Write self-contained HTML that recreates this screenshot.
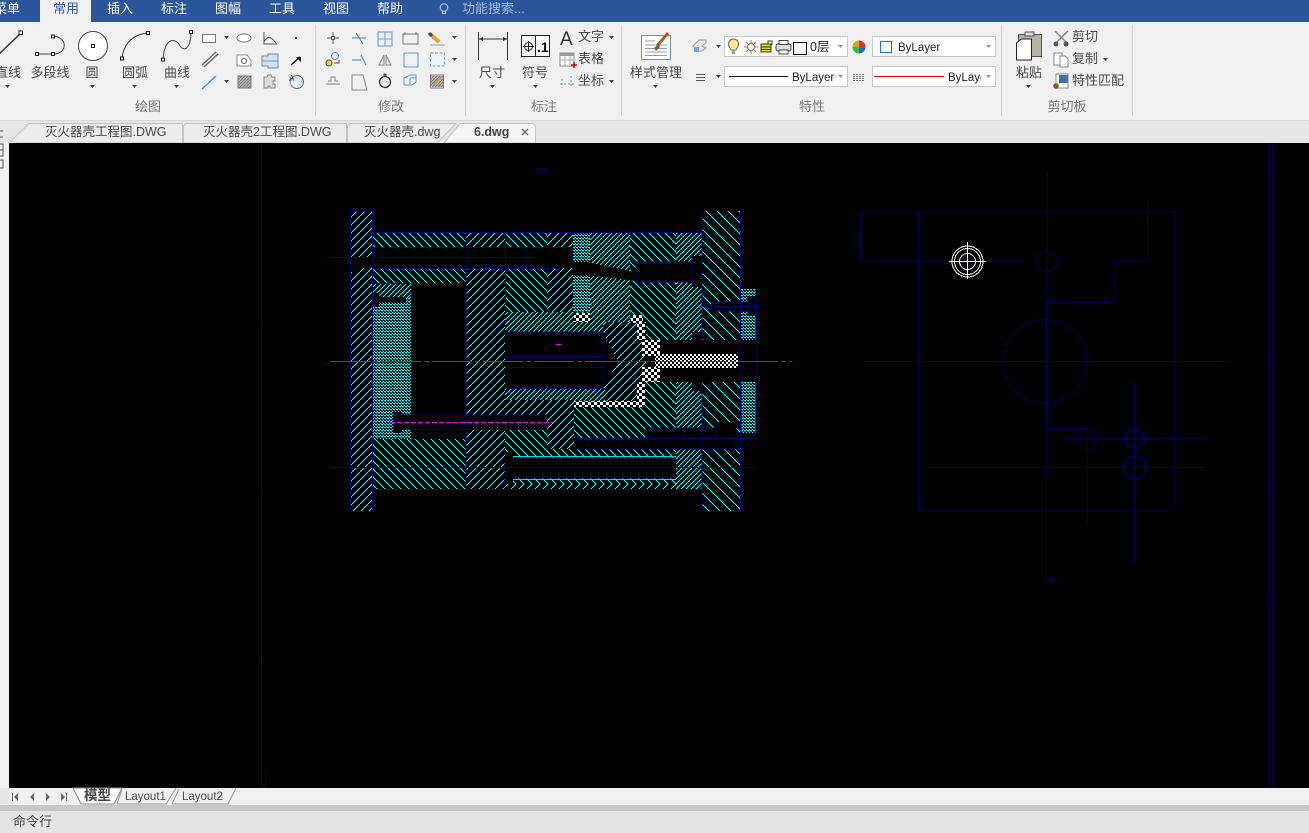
<!DOCTYPE html>
<html><head><meta charset="utf-8"><title>CAD</title>
<style>
html,body{margin:0;padding:0;width:1309px;height:833px;overflow:hidden;background:#f0f0f0}
svg{display:block}
text{font-family:"Liberation Sans","Noto Sans CJK SC",sans-serif;font-size:12px;fill:#444}
.m{fill:#fff;font-size:13px}
.l{text-anchor:middle;font-size:13px;fill:#4a4a4a}
.g{text-anchor:middle;font-size:13px;fill:#777}
.t{font-size:13px;fill:#4a4a4a}
.tb{font-size:12.5px;fill:#4a4a4a}
.by{font-size:11.5px;fill:#222}
.a{fill:#444}
.i{fill:none;stroke:#555;stroke-width:1}
.n{fill:none;stroke:#000070;stroke-width:1;shape-rendering:crispEdges}
.d{fill:none;stroke:#00004c;stroke-width:1;shape-rendering:crispEdges}
.c{fill:none;stroke:#000058;stroke-width:1}
</style></head><body>
<svg width="1309" height="833" viewBox="0 0 1309 833" xmlns="http://www.w3.org/2000/svg">
<defs>
<pattern id="f" width="8" height="8" patternUnits="userSpaceOnUse"><rect width="8" height="8" fill="#000"/><path d="M0 8L8 0" stroke="#00ffff" stroke-width="1.1" shape-rendering="crispEdges"/></pattern>
<pattern id="b" width="8" height="8" patternUnits="userSpaceOnUse"><rect width="8" height="8" fill="#000"/><path d="M0 0L8 8" stroke="#00ffff" stroke-width="1.1" shape-rendering="crispEdges"/></pattern>
<pattern id="F" width="5" height="5" patternUnits="userSpaceOnUse"><rect width="5" height="5" fill="#000"/><path d="M0 5L5 0" stroke="#00ffff" stroke-width="1.1" shape-rendering="crispEdges"/></pattern>
<pattern id="B" width="11" height="11" patternUnits="userSpaceOnUse"><rect width="11" height="11" fill="#000"/><path d="M0 0L11 11" stroke="#00ffff" stroke-width="1.1" shape-rendering="crispEdges"/></pattern>
<pattern id="D" width="3" height="3" patternUnits="userSpaceOnUse"><rect width="3" height="3" fill="#000"/><rect x="0" y="1" width="2" height="1" fill="#00ffff"/><rect x="2" y="0" width="1" height="1" fill="#00ffff"/><rect x="1" y="2" width="1" height="1" fill="#008c8c"/></pattern>
<pattern id="W" width="6" height="6" patternUnits="userSpaceOnUse"><rect width="6" height="6" fill="#000"/><rect width="3" height="3" fill="#fff"/><rect x="3" y="3" width="3" height="3" fill="#fff"/></pattern>
<pattern id="W2" width="4" height="4" patternUnits="userSpaceOnUse"><rect width="4" height="4" fill="#000"/><rect width="2" height="2" fill="#fff"/><rect x="2" y="2" width="2" height="2" fill="#fff"/></pattern>
<pattern id="H" width="3" height="3" patternUnits="userSpaceOnUse"><rect width="3" height="3" fill="#bbb"/><path d="M0 3L3 0" stroke="#777"/></pattern>
</defs>

<!-- chrome -->
<rect width="1309" height="833" fill="#f0f0f0"/>
<rect width="1309" height="22" fill="#2b579a"/>
<rect x="40" y="0" width="51" height="23" fill="#f0f0f0"/>
<text class="m" x="-6" y="13">菜单</text>
<text x="53" y="13" style="font-size:13px;fill:#2b579a">常用</text>
<text class="m" x="107" y="13">插入</text>
<text class="m" x="161" y="13">标注</text>
<text class="m" x="215" y="13">图幅</text>
<text class="m" x="269" y="13">工具</text>
<text class="m" x="323" y="13">视图</text>
<text class="m" x="377" y="13">帮助</text>
<g fill="none" stroke="#c4d2e8"><circle cx="444" cy="7.500" r="3.800"/><path d="M442.500 11v2.500h3V11"/></g>
<text x="462" y="13" style="font-size:13px;fill:#a8bcdb">功能搜索...</text>

<rect y="121" width="1309" height="22" fill="#e6e6e6"/>
<rect y="120" width="1309" height="1" fill="#d8d8d8"/>
<g stroke="#d4d4d4"><path d="M315.500 25V116M465.500 25V116M621.500 25V116M1001.500 25V116M1132.500 25V116" fill="none"/></g>

<!-- draw group -->
<path d="M-2 55L20 34" stroke="#444" stroke-width="1.600"/>
<rect x="19" y="31" width="3.500" height="3.500" fill="#fff" stroke="#222"/>
<path d="M37 54H53M53 36C68 37 68 54 53 54" fill="none" stroke="#444"/>
<g fill="#fff" stroke="#222"><rect x="35.500" y="52.500" width="3" height="3"/><rect x="51.500" y="52.500" width="3" height="3"/><rect x="51.500" y="35" width="3" height="3"/></g>
<circle cx="93" cy="46" r="14.500" fill="#fff" stroke="#444"/><rect x="91.500" y="44.500" width="3" height="3" fill="#fff" stroke="#222"/>
<path d="M122 58Q125 36 147 33" fill="none" stroke="#333"/><g fill="#fff" stroke="#111"><rect x="120.500" y="57" width="3" height="3"/><rect x="146.500" y="31.500" width="3" height="3"/></g>
<path d="M163 59C165 36 176 38 180 46C186 54 191 44 191 33" fill="none" stroke="#444"/><g fill="#fff" stroke="#222"><rect x="161.500" y="58" width="3" height="3"/><rect x="189.500" y="30.500" width="3" height="3"/></g>
<text class="l" x="8" y="77">直线</text><text class="l" x="50" y="77">多段线</text><text class="l" x="92" y="77">圆</text><text class="l" x="135" y="77">圆弧</text><text class="l" x="177" y="77">曲线</text>
<g class="a"><path d="M5 85h5l-2.500 3zM90 85h5l-2.500 3zM132 85h5l-2.500 3zM174 85h5l-2.500 3zM224 36h5l-2.500 3zM224 80h5l-2.500 3z"/></g>
<rect x="202.500" y="34.500" width="13" height="8" fill="#fff" stroke="#777"/>
<ellipse cx="244" cy="38" rx="7" ry="4" fill="#fff" stroke="#777"/>
<path d="M264 32V44H277M264 42C268 34 272 38 276 43" class="i"/><rect x="295" y="37" width="2" height="2" fill="#555"/>
<path d="M202 65L216 52M204 67L218 54" stroke="#666" stroke-width="1.400"/>
<path d="M237 55H247L251 60V66H237Z" fill="#fff" stroke="#888"/><circle cx="244" cy="61" r="2.500" class="i"/>
<path d="M262 56h6v-2h10v14h-10v-2h-6z" fill="#cfe0ee" stroke="#888"/><path d="M262 61h16" stroke="#5b9bd5"/>
<path d="M291 65L300 57" stroke="#111" stroke-width="1.400"/><path d="M296 57h5v5z" fill="#111"/>
<path d="M202 89L216 76" stroke="#2e9ae0" stroke-width="1.400"/>
<rect x="238" y="76" width="13" height="12" fill="url(#H)" stroke="#777"/>
<path d="M264 77h3l1-2h3l1 2h3v4h-2v3h2v4h-5v-2h-2v2h-4z" fill="#ddd" stroke="#888"/>
<circle cx="297" cy="82" r="6.500" fill="#cde6f7" stroke="#666"/><path d="M290.500 81h6.500v7a7 7 0 0 1-6.500-7z" fill="#fff"/><text x="289" y="81" style="font-size:8px;fill:#333">A</text>
<text class="g" x="148" y="111">绘图</text>

<!-- modify -->
<g class="i">
<path d="M333 32v4M333 40v4M327 38h4M335 38h4"/><rect x="331.500" y="36.500" width="3" height="3"/>
<path d="M352 38h14M356 33l7 11" stroke="#4a84b8"/>
<path d="M378 32h14v14h-14zM385 32v14M378 39h14" stroke="#5b9bd5"/>
<rect x="403" y="34" width="15" height="10" stroke="#777"/><path d="M405 32v3M416 32v3" stroke="#4a84b8"/>
<circle cx="335" cy="56" r="3.500" stroke="#4a90d0"/><path d="M334 63h5v-3" stroke="#a33"/>
<path d="M352 60h6M358 60h3M361 55l5 10" stroke="#4a84b8"/>
<path d="M384 55v10h-5zM386 55v10h5z" stroke="#888"/>
<rect x="404" y="53" width="14" height="14" stroke="#5b9bd5"/>
<rect x="430.500" y="53" width="14" height="13" stroke="#6aa9dc" stroke-dasharray="3 1.500"/>
<path d="M326 84h14M328 81h3v-4h4v4h3" stroke="#6a8aa5"/>
<path d="M352 75h11l4 15h-15z" stroke="#888"/>
<circle cx="385" cy="82" r="5.500" stroke="#333" stroke-width="1.300"/><rect x="384" y="74" width="2" height="2" fill="#333"/>
<path d="M404 78l6-3h6v7l-4 3h-8zM410 78h6M410 78v7" stroke="#5b9bd5"/>
<rect x="430.500" y="75" width="13" height="13" stroke="#777"/>
</g>
<circle cx="329" cy="63" r="3" fill="#f4d800" stroke="#555"/>
<rect x="431" y="76" width="12" height="11" fill="url(#H)"/>
<path d="M434 84l8-7" stroke="#e09020" stroke-width="1.500"/>
<path d="M430 34l9 8" stroke="#e8a030" stroke-width="4"/><path d="M429 33l3 3" stroke="#444" stroke-width="3"/><path d="M430 45h15" stroke="#999"/>
<g class="a"><path d="M452 36h5l-2.500 3zM452 58h5l-2.500 3zM452 80h5l-2.500 3z"/></g>
<text class="g" x="391" y="111">修改</text>

<!-- dim -->
<path d="M478.500 32V60M507.500 32V60M479 39H507" fill="none" stroke="#333"/>
<path d="M479 39l4-2v4zM507 39l-4-2v4z" fill="#333"/>
<text class="l" x="492" y="77">尺寸</text>
<path d="M490 85h5l-2.500 3zM533 85h5l-2.500 3z" class="a"/>
<rect x="521.500" y="35.500" width="28" height="21" fill="#fff" stroke="#222"/><path d="M535.500 35.500v21" stroke="#222"/>
<circle cx="528.500" cy="46.500" r="4" fill="none" stroke="#222"/><path d="M528.500 41v11M523 46.500h11" stroke="#222"/>
<text x="537" y="52" style="font-size:14px;font-weight:bold;fill:#000">.1</text>
<text class="l" x="535" y="77">符号</text>
<text x="560" y="45" style="font-size:19px;fill:#333">A</text>
<text class="t" x="578" y="41">文字</text><text class="t" x="578" y="63">表格</text><text class="t" x="578" y="85">坐标</text>
<rect x="560" y="53" width="14" height="13" fill="#fff" stroke="#888"/><rect x="560" y="53" width="14" height="3" fill="#999"/><path d="M560 60h14M565 56v10M570 56v10" stroke="#aaa"/>
<path d="M571 65h6M574 62v6" stroke="#c00" stroke-width="1.500"/>
<g stroke="#5b8fb8" stroke-dasharray="2 2" fill="none"><path d="M562 79v9M571 76v12M560 84h14"/></g>
<path d="M609 36h5l-2.500 3zM609 80h5l-2.500 3z" class="a"/>
<text class="g" x="544" y="111">标注</text>

<!-- style -->
<rect x="641.500" y="35.500" width="29" height="24" fill="#fff" stroke="#7f8f9f"/>
<path d="M645 41h10M645 45h22M645 48.500h22M645 52h22M645 55.500h22" stroke="#8aa0b5"/>
<path d="M657 46l11-13" stroke="#a4622a" stroke-width="3"/><path d="M654 48l5-4 1 3-4 4z" fill="#8b5a2b"/>
<text class="l" x="656" y="77">样式管理</text>
<path d="M653 85h5l-2.500 3z" class="a"/>

<!-- properties -->
<path d="M693 46l6-6h7v3l-4 3 4 2-4 3h-6v-2z" fill="#e8e8e8" stroke="#999"/><rect x="694" y="47" width="5" height="5" fill="#7ba7d0"/>
<path d="M696 74.500h9M696 77.500h9M696 80.500h9" stroke="#555"/>
<path d="M716 45h5l-2.500 3zM716 75h5l-2.500 3z" class="a"/>
<g fill="#fff" stroke="#c8c8c8"><rect x="724.500" y="36.500" width="123" height="20"/><rect x="872.500" y="36.500" width="123" height="20"/><rect x="724.500" y="66.500" width="123" height="20"/><rect x="872.500" y="66.500" width="123" height="20"/></g>
<path d="M731 50c-2-3-2.500-4-2.500-6a5 5 0 0 1 10 0c0 2-.5 3-2.500 6z" fill="#ffe98a" stroke="#666"/><rect x="732" y="50" width="3" height="4" fill="#999"/>
<circle cx="751" cy="47" r="3.500" fill="#fff6c8" stroke="#777"/><path d="M751 40v3M751 51v3M744 47h3M755 47h3M746 42l2 2M754 50l2 2M746 52l2-2M754 44l2-2" stroke="#777"/>
<rect x="761" y="44" width="10" height="8" fill="#e8d800" stroke="#333"/><path d="M768 44v-3h4v4" fill="none" stroke="#333"/><path d="M761 47h10M761 49.500h10" stroke="#333"/>
<rect x="776" y="44" width="15" height="7" rx="2" fill="#ddd" stroke="#444"/><rect x="779" y="40.500" width="9" height="4" fill="#fff" stroke="#444"/><rect x="779" y="50" width="9" height="4" fill="#fff" stroke="#444"/>
<rect x="793.500" y="42.500" width="13" height="12" fill="#fff" stroke="#111"/>
<text x="810" y="51" style="fill:#222;font-size:12.500px">0层</text>
<g fill="#999"><path d="M838 45h5l-2.500 3zM986 45h5l-2.500 3zM838 75h5l-2.500 3zM986 75h5l-2.500 3z"/></g>
<circle cx="859" cy="47" r="6.500" fill="#e8d020"/><path d="M859 47V40.500A6.500 6.500 0 0 1 865.500 47z" fill="#e03030"/><path d="M859 47H865.500A6.500 6.500 0 0 1 859 53.500z" fill="#3060e0"/><path d="M859 47V53.500A6.500 6.500 0 0 1 852.500 47z" fill="#30c040"/><path d="M859 47L852.500 47A6.500 6.500 0 0 1 859 40.500z" fill="#e0a020"/>
<rect x="880.500" y="41.500" width="11" height="11" fill="#fff" stroke="#1a78c8"/>
<text class="by" x="898" y="51">ByLayer</text>
<path d="M729 76.500h59" stroke="#111"/>
<text class="by" x="792" y="81">ByLayer</text>
<path d="M874 76.500h70" stroke="#d00"/>
<svg x="948" y="66" width="33" height="20" viewBox="0 0 33 20"><text class="by" x="0" y="15">ByLayer</text></svg>
<path d="M853 74.500h11M853 76.500h11M853 78.500h11M853 80.500h11" stroke="#777" stroke-dasharray="2 1"/>
<text class="g" x="812" y="111">特性</text>

<!-- clipboard -->
<rect x="1018.500" y="34.500" width="23" height="22" fill="#b8b1a4" stroke="#555"/><rect x="1025" y="32" width="9" height="4" fill="#ddd" stroke="#555"/>
<path d="M1016.500 43l5-4h10v21h-15z" fill="#fff" stroke="#222"/>
<text class="l" x="1029" y="77">粘贴</text><path d="M1026 85h5l-2.500 3z" class="a"/>
<path d="M1055 31l13 13M1068 31l-13 13" stroke="#888" stroke-width="1.500"/><circle cx="1056" cy="44" r="2.500" fill="#555"/><circle cx="1066" cy="44" r="2.500" fill="#555"/>
<text class="t" x="1072" y="41">剪切</text>
<path d="M1054 53h8v3h-2v9h-6z" fill="#fff" stroke="#888"/><path d="M1060 56h5l3 3v8h-8z" fill="#fff" stroke="#888"/>
<text class="t" x="1072" y="63">复制</text><path d="M1103 58h5l-2.500 3z" class="a"/>
<rect x="1056" y="74" width="12" height="14" fill="#fff" stroke="#888"/><rect x="1059" y="75" width="9" height="8" fill="#3f72a8"/><circle cx="1056" cy="86" r="2.800" fill="#8b5a2b"/>
<text class="t" x="1072" y="85">特性匹配</text>
<text class="g" x="1067" y="111">剪切板</text>

<!-- doc tabs -->
<path d="M9 143L29 123.500H182.500V143Z" fill="#ececec" stroke="#c4c4c4"/>
<path d="M183.500 143V126L186 123.500H346.500V143Z" fill="#ececec" stroke="#c4c4c4"/>
<path d="M347.500 143V126L350 123.500H456L437 143Z" fill="#ececec" stroke="#c4c4c4"/>
<path d="M444 143L460 123.500H533L535.500 126V143Z" fill="#f4f4f4" stroke="#c4c4c4"/>
<text class="tb" x="45" y="136">灭火器壳工程图.DWG</text>
<text class="tb" x="203" y="136">灭火器壳2工程图.DWG</text>
<text class="tb" x="364" y="136">灭火器壳.dwg</text>
<text x="474" y="136" style="font-weight:bold;fill:#444;font-size:12.500px">6.dwg</text>
<path d="M522 129l6 6M528 129l-6 6" stroke="#666" stroke-width="1.300"/>
<path d="M0 131h3M0 137h3M0 144h3v12H0M0 150h3M0 160h3v8H0" fill="none" stroke="#555"/>

<!-- canvas -->
<rect x="9" y="143" width="1300" height="645" fill="#000"/>
<path d="M261.500 143V788" stroke="#000088" fill="none" shape-rendering="crispEdges"/>
<g class="d">
<path d="M265.500 770V788"/>
<path d="M1268.500 143V788M1272.500 143V788"/>
<rect x="537.500" y="168.500" width="9" height="4"/>
<path d="M1267 169h6M1267 255h6M1267 362h6M1267 490h6M1267 600h6M258 320h6M258 490h6M258 660h6"/>
</g>

<!-- hatching -->
<rect x="350" y="211" width="23" height="301" fill="url(#f)"/>
<rect x="373" y="232" width="93" height="51" fill="url(#b)"/>
<rect x="466" y="232" width="39" height="258" fill="url(#f)"/>
<rect x="505" y="232" width="42" height="80" fill="url(#b)"/>
<rect x="547" y="232" width="26" height="80" fill="url(#f)"/>
<rect x="573" y="232" width="17" height="90" fill="url(#D)"/>
<rect x="590" y="232" width="40" height="90" fill="url(#F)"/>
<rect x="630" y="232" width="46" height="108" fill="url(#b)"/>
<rect x="676" y="232" width="26" height="108" fill="url(#F)"/>
<rect x="702" y="211" width="39" height="129" fill="url(#B)"/>
<rect x="741" y="289" width="15" height="51" fill="url(#D)"/>
<rect x="373" y="283" width="38" height="156" fill="url(#D)"/>
<rect x="373" y="283" width="38" height="14" fill="url(#F)"/>
<rect x="373" y="439" width="93" height="51" fill="url(#b)"/>
<rect x="505" y="312" width="125" height="20" fill="url(#F)"/>
<path d="M603 322H646V405H574V395H603Z" fill="url(#f)"/>
<rect x="505" y="388" width="100" height="13" fill="url(#F)"/>
<rect x="505" y="400" width="69" height="58" fill="url(#f)"/>
<rect x="505" y="429" width="42" height="29" fill="url(#b)"/>
<rect x="547" y="400" width="27" height="58" fill="url(#f)"/>
<rect x="574" y="405" width="71" height="44" fill="url(#b)"/>
<rect x="645" y="382" width="31" height="47" fill="url(#b)"/>
<rect x="676" y="382" width="26" height="108" fill="url(#F)"/>
<rect x="702" y="382" width="39" height="130" fill="url(#B)"/>
<rect x="741" y="382" width="15" height="52" fill="url(#D)"/>
<rect x="513" y="449" width="163" height="41" fill="url(#b)"/>
<rect x="505" y="484" width="171" height="6" fill="url(#f)"/>
<path d="M513 456.500H676M513 479.500H676" stroke="#00dddd" stroke-width="1"/>

<!-- black cut outs -->
<g fill="#000">
<rect x="373" y="247" width="200" height="21"/>
<path d="M350 257H373V268H359V272H350Z"/>
<rect x="411" y="283" width="55" height="156"/>
<rect x="401" y="415" width="146" height="14"/>
<rect x="393" y="412" width="8" height="21"/>
<rect x="373" y="297" width="33" height="5"/>
<rect x="373" y="293" width="6" height="14"/>
<path d="M573 262H587L630 271H636V262H692V256H702V287H692V282H636V281L587 275H573Z"/>
<path d="M505 332H603L618 361L603 388.500H505Z"/>
<rect x="711" y="302" width="39" height="9"/>
<rect x="748" y="296" width="7" height="20"/>
<rect x="660" y="340" width="96" height="42"/>
<rect x="574" y="438" width="167" height="11"/>
<rect x="645" y="428" width="71" height="10"/>
<rect x="716" y="422" width="20" height="16"/>
<rect x="736" y="433" width="20" height="16"/>
<rect x="505" y="452" width="8" height="32"/>
<rect x="513" y="458" width="163" height="20"/>
<rect x="692" y="332" width="10" height="8"/>
<rect x="692" y="382" width="10" height="9"/>
<rect x="373" y="490" width="329" height="22"/>
</g>
<!-- checker white -->
<g fill="url(#W)">
<rect x="574" y="313" width="16" height="9"/>
<rect x="631" y="315" width="12" height="8"/>
<rect x="637" y="323" width="8" height="17"/>
<rect x="642" y="340" width="18" height="16"/>
<rect x="642" y="367" width="18" height="15"/>
<rect x="637" y="382" width="8" height="20"/>
<rect x="574" y="401" width="71" height="6"/>
</g>
<rect x="655" y="354" width="83" height="14" fill="url(#W2)"/>
<!-- navy outlines -->
<g class="n">
<path d="M350.500 211V511.500H372.500V211H350.500ZM702 211V340M740.500 211V340M702 382V511.500H740.500V382"/>
<path d="M373 232.500H702M373 247.500H570M373 268.500H560M373 283.500H466M466 232V490M505.500 232V300M505 458V490M373 489.500H702"/>
<path d="M330 257.500H370M373 257.500H536M484 257.500V266M484 266H535M526 258V266M527 247V257M572 247V262"/>
<path d="M505.500 332H603V388.500H505.500M505 356.500H603M505 367.500H603"/>
<path d="M636 262V282M636 262H692V282H636M692 256V287"/>
<path d="M394 415H547M394 429.500H547M394 412V433"/>
<path d="M711 302H750M711 311H750M748 296V316M755 296V316M700 306.500H760"/>
<path d="M645 428H716M650 428V438M684 428V438M716 422V438M736 422V449M574 438.500H756M574 449H741"/>
<path d="M513 458H676M513 478H676M330 467.500H756"/>
<path d="M741 340V434M756 289V434"/>
</g>
<!-- center line -->
<path d="M330 361.500H791" stroke="#ff0000" stroke-dasharray="40 3 5 3"/>
<path d="M390 422.500H553" stroke="#ff00ff" stroke-dasharray="5 2"/>
<rect x="556" y="344" width="5" height="1" fill="#ff00ff"/>

<!-- right view -->
<g class="c">
<path d="M860 212H1175V502L1167 511H918V212M860.500 212V261H1024M918.500 212V511"/>
<rect x="856" y="234" width="3.500" height="11"/>
<path d="M1047.500 170V272M1046 272V478M1047 300V428"/>
<circle cx="1046.500" cy="261.500" r="10.300"/>
<path d="M1147.500 199V261H1114V302.500H1046"/>
<circle cx="1045" cy="361.500" r="42"/>
<path d="M863 361.500H1230"/>
<path d="M1046 428.500H1088"/>
<circle cx="1087.700" cy="438.500" r="10"/>
<path d="M1087.500 428V523M1066 438.500H1205M1134.500 382V563"/>
<circle cx="1134.700" cy="438.500" r="10"/><circle cx="1134.700" cy="438.500" r="8.500"/>
<circle cx="1134.700" cy="467.500" r="12"/><circle cx="1134.700" cy="467.500" r="10.700"/>
<path d="M928 467.500H1205M1045.500 478V581H1057"/>
<rect x="1049.500" y="576" width="3" height="4"/>
</g>
<!-- cursor -->
<g fill="none" stroke="#fff" shape-rendering="crispEdges">
<circle cx="967.500" cy="261.500" r="15.500"/><circle cx="967.500" cy="261.500" r="13"/><circle cx="967.500" cy="261.500" r="8"/>
<path d="M967.500 242V279M949 261.500H986"/>
</g>

<!-- bottom -->
<rect x="0" y="788" width="9" height="45" fill="#e6e6e6"/>
<rect x="9" y="788" width="1300" height="17" fill="#f0f0f0"/>
<rect y="805" width="1309" height="6" fill="#c8c8c8"/>
<rect y="811" width="1309" height="22" fill="#e4e4e4"/>
<g fill="#666"><path d="M12 793h1v8h-1zM18 793v8l-4-4zM34 793v8l-4-4zM46 793v8l4-4zM61 793v8l4-4zM66 793h1v8h-1z"/></g>
<path d="M73 788L81 804H114L122 788Z" fill="#fff" stroke="#888"/>
<path d="M117 804H166L176 788M122 789L117 804M172 804H228L236 788M179 789L172 804" fill="none" stroke="#999"/>
<text x="84" y="800" style="font-size:13.500px;font-weight:bold;fill:#444">模型</text>
<text x="125" y="800" style="font-size:11.500px;fill:#4a4a4a">Layout1</text>
<text x="182" y="800" style="font-size:11.500px;fill:#4a4a4a">Layout2</text>
<text x="13" y="826" style="font-size:13px;fill:#444">命令行</text>
</svg>
</body></html>
